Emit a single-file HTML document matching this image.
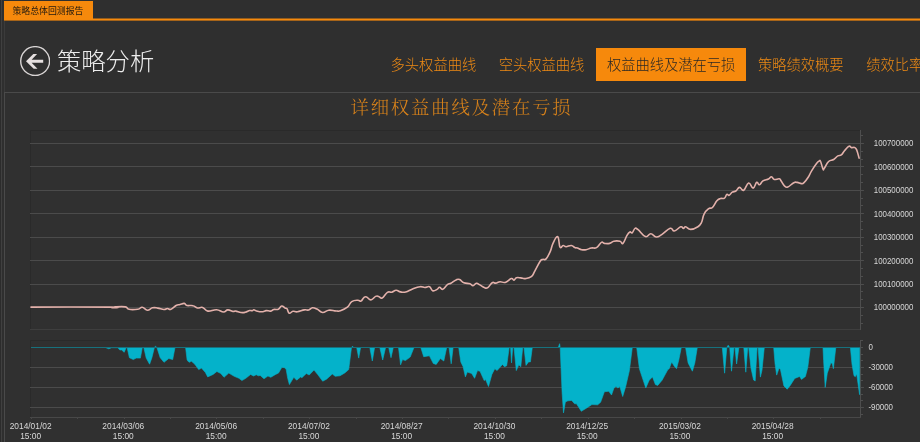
<!DOCTYPE html>
<html lang="zh-CN">
<head>
<meta charset="utf-8">
<title>策略总体回测报告</title>
<style>
html,body{margin:0;padding:0;}
body{width:920px;height:442px;overflow:hidden;background:#2f2f2f;position:relative;font-family:"Liberation Sans","Noto Sans CJK SC",sans-serif;}
.abs{position:absolute;}
svg,#title,#nav,#ctitle,#tab{will-change:transform;}
#strip{left:0;top:0;width:1px;height:442px;background:#2c2c2c;}
#strip3{left:4px;top:21px;width:1px;height:72px;background:#3b3b3b;}
#strip2{left:1px;top:0;width:1px;height:442px;background:#404040;}
#tab{left:4px;top:1px;width:87.8px;padding-right:1.2px;height:18px;background:#f6890c;color:#221a10;font-size:8.9px;line-height:20.6px;text-align:center;letter-spacing:0px;white-space:nowrap;}
#tabline{left:4px;top:19px;width:916px;height:2px;background:#f6890c;}
#tabshadow{left:4px;top:21px;width:916px;height:1px;background:#272a30;}
#back{left:20px;top:46px;width:30px;height:30px;}
#title{left:57px;top:44px;font-size:24.3px;line-height:36px;color:#ececec;font-weight:300;white-space:nowrap;font-family:"Liberation Sans","Noto Sans CJK SC",sans-serif;}
#nav{left:379.5px;top:48px;height:33.3px;white-space:nowrap;font-size:14.27px;line-height:35.4px;color:#ee8a14;font-weight:300;}
#nav span{display:inline-block;padding:0 12px 0 10.6px;height:33.3px;vertical-align:top;}
#nav span.on{background:#f6890c;color:#2b2825;padding-right:11px;margin-right:1px;}
#panel{left:4px;top:92px;width:920px;height:360px;border-left:1px solid #4a4a4a;border-top:1px solid #4a4a4a;box-sizing:border-box;background:#303030;}
#ctitle{left:0;top:95px;width:920px;text-align:center;font-family:"Liberation Serif","Noto Serif CJK SC",serif;font-size:18.4px;line-height:26px;color:#d8821a;letter-spacing:1.8px;white-space:nowrap;text-indent:3px;font-weight:300;}
</style>
</head>
<body>
<div id="strip" class="abs"></div>
<div id="strip2" class="abs"></div>
<div id="strip3" class="abs"></div>
<div id="tab" class="abs">策略总体回测报告</div>


<svg id="back" class="abs" viewBox="0 0 30 30">
<circle cx="15.15" cy="15.1" r="14.45" fill="none" stroke="#d9d5d5" stroke-width="1.4"/>
<path d="M6,15.2 L13.3,8.1 H17.1 L11.6,13.65 H23.2 V16.75 H11.6 L17.5,22.7 H13.7 Z" fill="#e6e0e0"/>
</svg>
<div id="title" class="abs">策略分析</div>
<div id="nav" class="abs"><span>多头权益曲线</span><span>空头权益曲线</span><span class="on">权益曲线及潜在亏损</span><span>策略绩效概要</span><span>绩效比率</span></div>
<div id="panel" class="abs"></div>
<div id="ctitle" class="abs">详细权益曲线及潜在亏损</div>
<svg width="920" height="442" viewBox="0 0 920 442" style="position:absolute;left:0;top:0" font-family="'Liberation Sans', sans-serif">
<rect x="4" y="18.5" width="916" height="2.1" fill="#f6890c"/>
<rect x="30" y="130" width="831" height="199.5" fill="#303030"/>
<rect x="30" y="340" width="831" height="77.5" fill="#303030"/>
<path d="M30.5,329.5 V130.5 H861" fill="none" stroke="#2a2a2a" stroke-width="1"/>
<path d="M30.5,417.5 V340.5 H861" fill="none" stroke="#2a2a2a" stroke-width="1"/>
<line x1="30" x2="864" y1="143.5" y2="143.5" stroke="#4b4b4b" stroke-width="1"/>
<line x1="30" x2="864" y1="166.5" y2="166.5" stroke="#4b4b4b" stroke-width="1"/>
<line x1="30" x2="864" y1="190.5" y2="190.5" stroke="#4b4b4b" stroke-width="1"/>
<line x1="30" x2="864" y1="213.5" y2="213.5" stroke="#4b4b4b" stroke-width="1"/>
<line x1="30" x2="864" y1="237.5" y2="237.5" stroke="#4b4b4b" stroke-width="1"/>
<line x1="30" x2="864" y1="260.5" y2="260.5" stroke="#4b4b4b" stroke-width="1"/>
<line x1="30" x2="864" y1="284.5" y2="284.5" stroke="#4b4b4b" stroke-width="1"/>
<line x1="30" x2="864" y1="307.5" y2="307.5" stroke="#4b4b4b" stroke-width="1"/>
<line x1="30" x2="861" y1="329.5" y2="329.5" stroke="#3e3e3e" stroke-width="1"/>
<line x1="860.5" x2="860.5" y1="130" y2="330" stroke="#4e4e4e" stroke-width="1"/>
<line x1="860" x2="863" y1="135.5" y2="135.5" stroke="#4e4e4e" stroke-width="1"/>
<line x1="860" x2="863" y1="143.5" y2="143.5" stroke="#4e4e4e" stroke-width="1"/>
<line x1="860" x2="863" y1="151.5" y2="151.5" stroke="#4e4e4e" stroke-width="1"/>
<line x1="860" x2="863" y1="159.5" y2="159.5" stroke="#4e4e4e" stroke-width="1"/>
<line x1="860" x2="863" y1="166.5" y2="166.5" stroke="#4e4e4e" stroke-width="1"/>
<line x1="860" x2="863" y1="174.5" y2="174.5" stroke="#4e4e4e" stroke-width="1"/>
<line x1="860" x2="863" y1="182.5" y2="182.5" stroke="#4e4e4e" stroke-width="1"/>
<line x1="860" x2="863" y1="190.5" y2="190.5" stroke="#4e4e4e" stroke-width="1"/>
<line x1="860" x2="863" y1="198.5" y2="198.5" stroke="#4e4e4e" stroke-width="1"/>
<line x1="860" x2="863" y1="205.5" y2="205.5" stroke="#4e4e4e" stroke-width="1"/>
<line x1="860" x2="863" y1="213.5" y2="213.5" stroke="#4e4e4e" stroke-width="1"/>
<line x1="860" x2="863" y1="221.5" y2="221.5" stroke="#4e4e4e" stroke-width="1"/>
<line x1="860" x2="863" y1="229.5" y2="229.5" stroke="#4e4e4e" stroke-width="1"/>
<line x1="860" x2="863" y1="237.5" y2="237.5" stroke="#4e4e4e" stroke-width="1"/>
<line x1="860" x2="863" y1="245.5" y2="245.5" stroke="#4e4e4e" stroke-width="1"/>
<line x1="860" x2="863" y1="252.5" y2="252.5" stroke="#4e4e4e" stroke-width="1"/>
<line x1="860" x2="863" y1="260.5" y2="260.5" stroke="#4e4e4e" stroke-width="1"/>
<line x1="860" x2="863" y1="268.5" y2="268.5" stroke="#4e4e4e" stroke-width="1"/>
<line x1="860" x2="863" y1="276.5" y2="276.5" stroke="#4e4e4e" stroke-width="1"/>
<line x1="860" x2="863" y1="284.5" y2="284.5" stroke="#4e4e4e" stroke-width="1"/>
<line x1="860" x2="863" y1="291.5" y2="291.5" stroke="#4e4e4e" stroke-width="1"/>
<line x1="860" x2="863" y1="299.5" y2="299.5" stroke="#4e4e4e" stroke-width="1"/>
<line x1="860" x2="863" y1="307.5" y2="307.5" stroke="#4e4e4e" stroke-width="1"/>
<line x1="860" x2="863" y1="315.5" y2="315.5" stroke="#4e4e4e" stroke-width="1"/>
<line x1="860" x2="863" y1="323.5" y2="323.5" stroke="#4e4e4e" stroke-width="1"/>
<line x1="30" x2="864" y1="367.5" y2="367.5" stroke="#4b4b4b" stroke-width="1"/>
<line x1="30" x2="864" y1="387.5" y2="387.5" stroke="#4b4b4b" stroke-width="1"/>
<line x1="30" x2="864" y1="407.5" y2="407.5" stroke="#4b4b4b" stroke-width="1"/>
<line x1="860.5" x2="860.5" y1="340" y2="418" stroke="#4e4e4e" stroke-width="1"/>
<line x1="860" x2="863" y1="340.5" y2="340.5" stroke="#4e4e4e" stroke-width="1"/>
<line x1="860" x2="863" y1="347.5" y2="347.5" stroke="#4e4e4e" stroke-width="1"/>
<line x1="860" x2="863" y1="354.5" y2="354.5" stroke="#4e4e4e" stroke-width="1"/>
<line x1="860" x2="863" y1="360.5" y2="360.5" stroke="#4e4e4e" stroke-width="1"/>
<line x1="860" x2="863" y1="367.5" y2="367.5" stroke="#4e4e4e" stroke-width="1"/>
<line x1="860" x2="863" y1="374.5" y2="374.5" stroke="#4e4e4e" stroke-width="1"/>
<line x1="860" x2="863" y1="380.5" y2="380.5" stroke="#4e4e4e" stroke-width="1"/>
<line x1="860" x2="863" y1="387.5" y2="387.5" stroke="#4e4e4e" stroke-width="1"/>
<line x1="860" x2="863" y1="394.5" y2="394.5" stroke="#4e4e4e" stroke-width="1"/>
<line x1="860" x2="863" y1="400.5" y2="400.5" stroke="#4e4e4e" stroke-width="1"/>
<line x1="860" x2="863" y1="407.5" y2="407.5" stroke="#4e4e4e" stroke-width="1"/>
<line x1="860" x2="863" y1="414.5" y2="414.5" stroke="#4e4e4e" stroke-width="1"/>
<line x1="30" x2="861" y1="417.5" y2="417.5" stroke="#484848" stroke-width="1"/>
<line x1="31.5" x2="31.5" y1="417" y2="419" stroke="#474747" stroke-width="1"/>
<line x1="77.5" x2="77.5" y1="417" y2="419" stroke="#474747" stroke-width="1"/>
<line x1="124.5" x2="124.5" y1="417" y2="419" stroke="#474747" stroke-width="1"/>
<line x1="170.5" x2="170.5" y1="417" y2="419" stroke="#474747" stroke-width="1"/>
<line x1="216.5" x2="216.5" y1="417" y2="419" stroke="#474747" stroke-width="1"/>
<line x1="263.5" x2="263.5" y1="417" y2="419" stroke="#474747" stroke-width="1"/>
<line x1="309.5" x2="309.5" y1="417" y2="419" stroke="#474747" stroke-width="1"/>
<line x1="356.5" x2="356.5" y1="417" y2="419" stroke="#474747" stroke-width="1"/>
<line x1="402.5" x2="402.5" y1="417" y2="419" stroke="#474747" stroke-width="1"/>
<line x1="448.5" x2="448.5" y1="417" y2="419" stroke="#474747" stroke-width="1"/>
<line x1="495.5" x2="495.5" y1="417" y2="419" stroke="#474747" stroke-width="1"/>
<line x1="541.5" x2="541.5" y1="417" y2="419" stroke="#474747" stroke-width="1"/>
<line x1="588.5" x2="588.5" y1="417" y2="419" stroke="#474747" stroke-width="1"/>
<line x1="634.5" x2="634.5" y1="417" y2="419" stroke="#474747" stroke-width="1"/>
<line x1="681.5" x2="681.5" y1="417" y2="419" stroke="#474747" stroke-width="1"/>
<line x1="727.5" x2="727.5" y1="417" y2="419" stroke="#474747" stroke-width="1"/>
<line x1="773.5" x2="773.5" y1="417" y2="419" stroke="#474747" stroke-width="1"/>
<line x1="820.5" x2="820.5" y1="417" y2="419" stroke="#474747" stroke-width="1"/>
<path d="M105.4,347.5 L108.8,348.8 L111.5,347.7 L117.9,347.7 L119.8,350.0 L121.7,350.0 L124.2,352.3 L126.2,347.5 L127.1,347.5 L129.4,357.7 L133.3,359.6 L136.2,358.1 L140.4,358.1 L142.3,347.5 L143.8,347.5 L146.2,358.1 L149.6,364.2 L151.9,357.7 L154.4,347.5 L155.4,346.2 L156.9,347.5 L160.2,357.7 L164.0,362.3 L168.8,358.5 L172.7,359.6 L175.0,347.5 L185.6,347.5 L187.1,360.0 L189.0,362.3 L191.5,361.3 L194.8,364.2 L198.7,369.6 L201.5,368.1 L205.4,372.5 L207.7,376.9 L213.1,374.4 L216.9,371.5 L220.8,373.5 L224.0,377.3 L228.8,373.1 L234.2,376.3 L239.0,378.3 L241.9,380.6 L245.8,378.3 L250.6,374.4 L253.5,376.0 L256.3,374.8 L258.3,375.8 L260.2,375.4 L264.0,378.8 L267.9,376.0 L270.8,377.3 L275.6,374.4 L278.5,373.1 L281.9,367.3 L284.6,367.7 L286.2,369.6 L287.7,378.3 L289.4,384.6 L293.8,377.3 L296.7,380.2 L300.6,376.9 L301.9,377.7 L306.3,373.5 L309.2,375.0 L314.0,370.0 L317.9,374.8 L322.7,381.2 L326.5,379.2 L332.3,374.0 L335.2,376.3 L340.0,375.8 L344.8,372.9 L348.7,369.6 L351.5,347.5 L352.5,346.2 L353.5,347.5 L356.7,347.5 L358.7,358.1 L360.6,347.5 L369.8,347.5 L372.3,361.0 L374.6,347.5 L379.8,347.5 L382.7,360.0 L385.6,347.5 L388.7,347.5 L391.0,357.7 L393.3,347.5 L398.5,347.5 L400.6,364.8 L402.5,359.6 L405.4,360.6 L410.2,357.1 L414.0,347.5 L420.8,347.5 L423.7,356.7 L429.4,355.8 L433.3,363.5 L436.2,364.4 L440.4,358.5 L443.8,361.0 L446.7,347.5 L449.0,347.5 L451.2,363.8 L453.1,347.5 L458.7,347.5 L460.8,361.9 L463.1,366.7 L465.4,376.9 L467.3,372.1 L471.7,373.5 L474.6,378.3 L477.5,370.6 L480.0,371.2 L484.2,380.6 L485.6,379.6 L488.5,386.5 L491.9,374.4 L494.8,368.7 L497.1,370.6 L502.5,364.4 L504.4,366.7 L506.7,365.8 L509.2,347.5 L510.6,347.5 L511.5,362.9 L512.7,347.5 L514.0,347.5 L516.3,370.6 L518.8,364.8 L520.8,366.7 L522.7,347.5 L524.0,347.5 L526.0,365.4 L528.5,361.9 L530.4,361.9 L532.3,347.5 L558.3,347.5 L559.6,343.7 L560.2,347.5 L562.1,392.7 L563.5,412.9 L565.4,401.9 L567.9,400.8 L571.7,400.4 L574.6,403.8 L576.5,403.8 L581.3,411.3 L587.1,407.7 L591.9,404.6 L597.7,404.8 L600.6,402.3 L604.4,391.7 L608.8,391.3 L611.5,395.0 L614.0,387.9 L616.0,386.5 L617.9,387.9 L619.8,386.5 L622.7,396.5 L625.6,386.9 L629.4,370.6 L632.3,347.5 L636.7,347.5 L639.4,368.7 L643.8,382.1 L645.8,387.9 L649.2,380.2 L652.5,376.9 L655.4,384.6 L657.7,385.4 L662.1,380.2 L667.9,369.6 L669.2,368.7 L671.7,361.9 L674.0,365.8 L676.5,368.7 L678.8,360.0 L681.3,347.5 L685.6,347.5 L688.1,362.9 L692.4,371.2 L694.8,363.0 L697.3,347.5 L722.3,347.5 L724.6,373.2 L726.8,347.5 L728.2,345.2 L729.7,347.5 L731.5,371.2 L734.0,347.5 L735.0,347.5 L736.6,364.0 L738.9,347.5 L743.8,347.5 L745.8,372.2 L747.7,347.5 L748.7,347.5 L751.0,368.3 L753.6,380.0 L755.2,381.0 L757.1,347.5 L758.1,347.5 L760.4,377.1 L762.0,370.2 L764.3,347.5 L773.7,347.5 L775.1,364.3 L776.7,375.1 L779.0,368.3 L780.4,369.2 L783.9,385.9 L787.2,389.2 L790.2,385.5 L794.7,378.4 L799.6,376.5 L801.5,379.4 L805.4,376.5 L807.8,367.3 L810.3,347.5 L823.0,347.5 L823.6,360.4 L825.2,387.4 L827.3,373.2 L830.9,362.8 L832.2,363.4 L833.4,368.7 L835.8,347.5 L850.4,347.5 L852.0,364.3 L854.0,375.7 L855.3,376.7 L856.7,374.1 L858.2,384.9 L859.6,394.7 L859.6,347.5 Z" fill="#04b2ca" stroke="#04b2ca" stroke-width="0.6" stroke-linejoin="round"/>
<line x1="31" x2="860" y1="347.5" y2="347.5" stroke="#17717d" stroke-width="1"/>
<path d="M31.0,307.1 C48.4,307.1 92.2,306.9 110.0,307.1 C127.8,307.3 110.8,307.8 112.1,307.8 C113.4,307.8 113.1,307.1 116.0,306.9 C118.9,306.7 122.4,306.4 125.3,306.9 C128.2,307.4 126.3,308.8 129.1,309.3 C131.8,309.8 134.9,309.6 137.8,309.2 C140.7,308.8 140.1,307.1 142.2,307.3 C144.3,307.5 145.1,310.1 147.4,310.2 C149.7,310.3 150.3,308.3 152.6,307.8 C154.9,307.3 155.3,307.7 157.8,308.1 C160.3,308.5 161.8,309.4 163.9,309.5 C166.0,309.6 165.9,308.5 167.4,308.5 C168.9,308.5 169.0,310.0 170.9,309.3 C172.8,308.6 174.1,306.6 176.1,305.5 C178.1,304.4 178.2,305.0 180.0,304.5 C181.8,304.0 182.8,303.2 184.3,303.4 C185.8,303.6 185.1,305.0 187.0,305.5 C188.9,306.0 190.7,305.1 193.0,305.7 C195.3,306.2 195.3,307.6 197.4,308.0 C199.5,308.4 200.3,306.7 202.6,307.4 C204.9,308.1 204.7,310.6 207.8,311.1 C210.9,311.6 213.0,309.5 216.5,309.7 C220.0,309.9 221.0,312.0 223.5,312.0 C226.0,312.0 225.7,310.0 227.8,309.9 C229.9,309.8 231.3,311.1 233.0,311.4 C234.7,311.7 234.0,310.9 235.7,311.1 C237.4,311.3 238.8,312.2 240.9,312.5 C243.0,312.8 243.3,312.7 245.2,312.3 C247.1,311.9 248.1,311.0 249.6,310.6 C251.1,310.2 251.3,310.9 252.2,310.7 C253.1,310.5 253.0,309.7 253.9,309.7 C254.8,309.7 254.6,310.4 256.5,310.9 C258.4,311.4 260.5,311.9 262.6,311.8 C264.7,311.7 264.4,310.8 266.1,310.6 C267.8,310.4 268.7,311.3 270.4,311.1 C272.1,310.9 272.2,309.9 273.9,309.5 C275.6,309.1 276.6,310.0 278.3,309.2 C280.0,308.4 280.2,306.2 281.7,306.0 C283.2,305.8 284.0,307.5 285.2,308.1 C286.4,308.7 286.1,307.7 287.0,308.8 C287.9,309.9 287.9,312.6 289.2,313.2 C290.5,313.8 291.2,311.6 293.0,311.3 C294.8,311.0 294.9,312.1 297.4,311.8 C299.9,311.5 301.8,310.3 304.3,309.9 C306.8,309.5 306.9,310.5 308.7,310.0 C310.5,309.5 310.6,308.0 312.5,307.8 C314.4,307.6 315.2,308.3 317.4,309.3 C319.6,310.3 320.1,312.3 322.6,312.5 C325.1,312.7 326.0,310.6 328.7,310.2 C331.4,309.8 333.0,310.7 334.8,310.9 C336.6,311.1 335.8,311.0 337.0,311.0 C338.2,311.0 338.1,311.6 340.4,310.8 C342.7,310.0 344.9,309.2 347.4,307.2 C349.9,305.2 349.4,303.1 351.7,301.6 C354.0,300.1 355.8,300.3 357.8,300.2 C359.8,300.1 359.7,301.7 361.0,301.1 C362.3,300.5 362.7,298.5 363.9,297.6 C365.1,296.7 365.0,296.4 366.5,296.9 C368.0,297.4 368.9,300.0 370.9,299.9 C372.9,299.8 373.9,297.2 375.6,296.4 C377.3,295.6 377.2,296.0 378.7,296.4 C380.2,296.8 380.3,298.9 382.2,298.0 C384.1,297.1 385.3,293.7 387.4,292.4 C389.5,291.1 389.8,292.7 391.7,292.2 C393.6,291.7 394.2,290.4 396.1,290.3 C398.0,290.2 398.3,291.5 400.4,291.9 C402.5,292.3 403.0,292.7 405.7,292.0 C408.4,291.3 409.4,290.1 412.6,288.9 C415.8,287.7 417.4,287.0 420.1,286.7 C422.8,286.4 422.7,287.5 424.8,287.5 C426.9,287.5 427.8,286.0 429.5,286.7 C431.2,287.4 431.0,290.1 432.6,290.7 C434.2,291.3 435.5,290.2 437.0,289.4 C438.5,288.6 438.3,287.2 439.6,287.2 C440.9,287.2 441.0,289.9 442.7,289.3 C444.4,288.7 445.6,285.9 447.4,284.6 C449.2,283.3 449.0,284.2 450.9,283.2 C452.8,282.2 454.2,280.7 456.1,279.9 C458.0,279.1 457.9,278.9 459.6,279.5 C461.3,280.1 461.6,281.9 463.9,282.8 C466.2,283.7 468.0,283.0 470.0,283.7 C472.0,284.4 471.6,285.9 473.0,285.8 C474.4,285.7 474.9,283.5 476.4,283.3 C477.9,283.1 478.2,284.0 479.9,284.9 C481.6,285.8 482.6,287.0 484.3,287.6 C486.0,288.2 486.1,288.7 487.8,287.6 C489.5,286.5 490.5,283.7 492.2,282.7 C493.9,281.7 494.0,283.3 495.7,283.1 C497.4,282.9 497.9,281.9 500.0,281.7 C502.1,281.5 502.7,283.1 505.2,282.4 C507.7,281.7 509.4,279.1 511.3,278.6 C513.2,278.1 512.8,280.3 513.9,280.1 C515.0,279.9 515.0,278.2 516.5,277.7 C518.0,277.2 519.0,277.7 520.9,277.9 C522.8,278.1 522.9,278.9 525.2,278.6 C527.5,278.3 529.2,278.3 531.3,276.7 C533.4,275.1 532.9,274.4 534.8,271.1 C536.7,267.8 538.3,264.1 540.0,261.5 C541.7,258.9 541.3,260.0 542.6,259.4 C543.9,258.8 544.4,260.7 546.1,258.9 C547.8,257.1 548.9,254.5 550.4,251.1 C551.9,247.7 551.4,246.5 553.0,243.3 C554.6,240.1 556.2,235.9 557.7,236.7 C559.2,237.5 558.8,245.2 560.0,247.1 C561.2,249.0 561.8,245.6 563.1,245.5 C564.4,245.4 564.3,246.7 566.1,246.7 C567.9,246.7 569.4,245.3 571.3,245.5 C573.2,245.7 573.5,247.0 574.8,247.6 C576.1,248.2 575.9,247.5 577.4,248.0 C578.9,248.5 579.8,249.3 581.7,249.7 C583.6,250.1 584.0,250.1 586.1,249.7 C588.2,249.3 589.0,248.5 591.3,248.0 C593.6,247.5 594.3,248.8 596.5,247.6 C598.7,246.4 599.7,243.3 601.4,242.4 C603.1,241.5 602.5,243.2 604.3,243.4 C606.1,243.6 607.5,243.9 609.6,243.4 C611.7,242.9 611.6,241.7 613.9,241.2 C616.2,240.7 618.0,240.8 620.0,241.3 C622.0,241.8 621.5,244.6 623.0,243.3 C624.5,242.0 625.5,237.9 627.0,235.4 C628.5,232.9 628.8,232.6 629.9,232.0 C631.0,231.4 631.1,233.6 632.2,232.8 C633.3,232.0 633.8,229.1 635.1,228.4 C636.4,227.7 635.8,227.9 638.1,229.7 C640.4,231.5 642.6,235.7 645.4,236.6 C648.2,237.5 648.4,233.6 650.8,233.7 C653.2,233.8 653.8,236.8 656.2,237.0 C658.6,237.2 658.6,236.5 661.7,234.6 C664.8,232.7 667.4,229.1 670.2,228.3 C673.0,227.5 672.0,231.3 674.3,231.0 C676.6,230.7 678.7,227.4 680.7,226.8 C682.7,226.2 682.3,228.5 683.4,228.5 C684.5,228.5 684.1,226.5 685.7,226.7 C687.3,226.9 687.9,229.4 690.6,229.4 C693.3,229.4 695.5,228.2 697.9,226.7 C700.3,225.2 700.1,225.3 701.5,222.5 C702.9,219.7 702.6,216.9 704.2,213.8 C705.8,210.7 706.9,210.0 708.7,208.6 C710.5,207.2 710.6,209.2 712.4,207.5 C714.2,205.8 715.1,202.8 716.9,200.8 C718.7,198.8 718.8,199.2 720.5,198.6 C722.2,198.0 723.1,199.0 724.5,198.1 C725.9,197.2 725.8,195.0 726.8,194.4 C727.8,193.8 728.0,195.8 729.2,195.3 C730.4,194.8 730.8,193.0 732.3,192.1 C733.8,191.2 734.3,192.0 735.9,191.0 C737.5,190.0 737.8,187.6 739.5,187.4 C741.2,187.2 741.7,191.3 743.7,190.3 C745.7,189.3 746.5,183.5 748.6,183.0 C750.7,182.5 751.3,188.3 753.1,188.1 C754.9,187.9 755.3,183.0 756.7,182.3 C758.1,181.6 758.0,185.1 759.4,184.8 C760.8,184.5 761.0,182.2 763.0,180.9 C765.0,179.6 766.6,179.9 768.5,179.0 C770.4,178.1 770.2,176.7 771.5,176.8 C772.8,176.9 772.5,179.1 774.2,179.5 C775.9,179.9 777.8,178.5 779.3,178.8 C780.8,179.1 779.9,179.2 781.0,180.7 C782.1,182.2 782.9,184.4 784.4,185.8 C785.9,187.2 785.7,187.7 787.8,187.0 C789.9,186.3 791.7,183.7 793.8,182.7 C795.9,181.7 795.5,182.2 797.2,182.4 C798.9,182.6 799.9,183.5 801.4,183.6 C802.9,183.7 802.5,184.1 804.0,182.7 C805.5,181.3 806.5,179.9 808.2,177.3 C809.9,174.7 809.7,173.9 811.6,170.8 C813.5,167.7 815.0,165.4 816.7,163.2 C818.4,161.0 818.3,161.4 819.2,161.0 C820.1,160.6 819.8,159.7 820.6,161.5 C821.4,163.3 822.2,167.6 823.0,169.1 C823.8,170.6 823.1,170.0 824.3,168.3 C825.5,166.6 826.5,163.4 828.6,161.5 C830.7,159.6 831.7,160.7 833.7,159.5 C835.7,158.3 836.2,156.9 837.9,155.9 C839.6,154.9 839.8,156.1 841.3,154.9 C842.8,153.7 843.0,152.4 844.7,150.5 C846.4,148.6 847.5,146.8 849.0,146.2 C850.5,145.6 850.2,147.3 851.5,147.6 C852.8,147.9 853.7,147.0 854.9,147.6 C856.1,148.2 856.0,148.2 856.9,150.5 C857.8,152.8 858.6,156.4 859.1,158.1" fill="none" stroke="#e3b1ab" stroke-width="1.6" stroke-linejoin="round" stroke-linecap="round"/>
<text transform="translate(873.8,146.4) scale(0.91,1)" font-size="8.7" fill="#d8d8d8">100700000</text>
<text transform="translate(873.8,169.8) scale(0.91,1)" font-size="8.7" fill="#d8d8d8">100600000</text>
<text transform="translate(873.8,193.3) scale(0.91,1)" font-size="8.7" fill="#d8d8d8">100500000</text>
<text transform="translate(873.8,216.7) scale(0.91,1)" font-size="8.7" fill="#d8d8d8">100400000</text>
<text transform="translate(873.8,240.1) scale(0.91,1)" font-size="8.7" fill="#d8d8d8">100300000</text>
<text transform="translate(873.8,263.5) scale(0.91,1)" font-size="8.7" fill="#d8d8d8">100200000</text>
<text transform="translate(873.8,287.0) scale(0.91,1)" font-size="8.7" fill="#d8d8d8">100100000</text>
<text transform="translate(873.8,310.4) scale(0.91,1)" font-size="8.7" fill="#d8d8d8">100000000</text>
<text transform="translate(868.4,350.4) scale(0.91,1)" font-size="8.7" fill="#d8d8d8">0</text>
<text transform="translate(868.4,370.4) scale(0.91,1)" font-size="8.7" fill="#d8d8d8">-30000</text>
<text transform="translate(868.4,390.4) scale(0.91,1)" font-size="8.7" fill="#d8d8d8">-60000</text>
<text transform="translate(868.4,410.4) scale(0.91,1)" font-size="8.7" fill="#d8d8d8">-90000</text>
<text transform="translate(30.6,429.1) scale(0.93,1)" font-size="9" fill="#d8d8d8" text-anchor="middle">2014/01/02</text>
<text transform="translate(30.6,438.9) scale(0.93,1)" font-size="9" fill="#d8d8d8" text-anchor="middle">15:00</text>
<text transform="translate(123.3,429.1) scale(0.93,1)" font-size="9" fill="#d8d8d8" text-anchor="middle">2014/03/06</text>
<text transform="translate(123.3,438.9) scale(0.93,1)" font-size="9" fill="#d8d8d8" text-anchor="middle">15:00</text>
<text transform="translate(216.1,429.1) scale(0.93,1)" font-size="9" fill="#d8d8d8" text-anchor="middle">2014/05/06</text>
<text transform="translate(216.1,438.9) scale(0.93,1)" font-size="9" fill="#d8d8d8" text-anchor="middle">15:00</text>
<text transform="translate(308.9,429.1) scale(0.93,1)" font-size="9" fill="#d8d8d8" text-anchor="middle">2014/07/02</text>
<text transform="translate(308.9,438.9) scale(0.93,1)" font-size="9" fill="#d8d8d8" text-anchor="middle">15:00</text>
<text transform="translate(401.6,429.1) scale(0.93,1)" font-size="9" fill="#d8d8d8" text-anchor="middle">2014/08/27</text>
<text transform="translate(401.6,438.9) scale(0.93,1)" font-size="9" fill="#d8d8d8" text-anchor="middle">15:00</text>
<text transform="translate(494.4,429.1) scale(0.93,1)" font-size="9" fill="#d8d8d8" text-anchor="middle">2014/10/30</text>
<text transform="translate(494.4,438.9) scale(0.93,1)" font-size="9" fill="#d8d8d8" text-anchor="middle">15:00</text>
<text transform="translate(587.1,429.1) scale(0.93,1)" font-size="9" fill="#d8d8d8" text-anchor="middle">2014/12/25</text>
<text transform="translate(587.1,438.9) scale(0.93,1)" font-size="9" fill="#d8d8d8" text-anchor="middle">15:00</text>
<text transform="translate(679.9,429.1) scale(0.93,1)" font-size="9" fill="#d8d8d8" text-anchor="middle">2015/03/02</text>
<text transform="translate(679.9,438.9) scale(0.93,1)" font-size="9" fill="#d8d8d8" text-anchor="middle">15:00</text>
<text transform="translate(772.6,429.1) scale(0.93,1)" font-size="9" fill="#d8d8d8" text-anchor="middle">2015/04/28</text>
<text transform="translate(772.6,438.9) scale(0.93,1)" font-size="9" fill="#d8d8d8" text-anchor="middle">15:00</text>
</svg>
</body>
</html>
